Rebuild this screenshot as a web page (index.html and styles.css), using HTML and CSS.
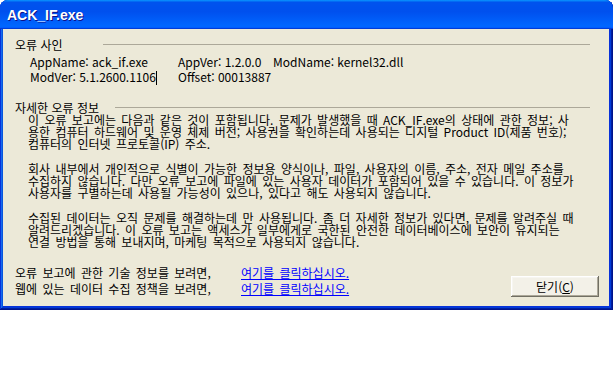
FILE: index.html
```html
<!DOCTYPE html>
<html lang="ko">
<head>
    <meta charset="UTF-8">
    <meta name="viewport" content="width=device-width, initial-scale=1.0">
    <title>ACK_IF.exe</title>
    <link rel="stylesheet" href="styles.css">
</head>
<body>
    <div class="window">
        <div class="title-bar">ACK_IF.exe</div>

        <div class="window-body">
            <div class="group-title">
                <span class="group-label label-cause">오류 사인</span>
                <span class="rule"></span>
            </div>
            <div class="sig">
                <span>AppName: ack_if.exe</span>
                <span>AppVer: 1.2.0.0</span>
                <span>ModName: kernel32.dll</span>
                <span>ModVer: 5.1.2600.1106<span class="caret"></span></span>
                <span>Offset: 00013887</span>
            </div>

            <div class="group-title group-details">
                <span class="group-label label-details">자세한 오류 정보</span>
                <span class="rule"></span>
            </div>
            <div class="details">
                <p>이 오류 보고에는 다음과 같은 것이 포함됩니다. 문제가 발생했을 때 ACK_IF.exe의 상태에 관한 정보; 사<br>용한 컴퓨터 하드웨어 및 운영 체제 버전; 사용권을 확인하는데 사용되는 디지털 Product ID(제품 번호);<br>컴퓨터의 인터넷 프로토콜(IP) 주소.</p>
                <p>회사 내부에서 개인적으로 식별이 가능한 정보용 양식이나, 파일, 사용자의 이름, 주소, 전자 메일 주소를<br>수집하지 않습니다. 다만 오류 보고에 파일에 있는 사용자 데이터가 포함되어 있을 수 있습니다. 이 정보가<br>사용자를 구별하는데 사용될 가능성이 있으나, 있다고 해도 사용되지 않습니다.</p>
                <p>수집된 데이터는 오직 문제를 해결하는데 만 사용됩니다. 좀 더 자세한 정보가 있다면, 문제를 알려주실 때<br>알려드리겠습니다. 이 오류 보고는 액세스가 일부에게로 국한된 안전한 데이터베이스에 보안이 유지되는<br>연결 방법을 통해 보내지며, 마케팅 목적으로 사용되지 않습니다.</p>
            </div>

            <div class="footer">
                <div class="help">
                    <span>오류 보고에 관한 기술 정보를 보려면,</span>
                    <a href="#">여기를 클릭하십시오.</a>
                    <span>웹에 있는 데이터 수집 정책을 보려면,</span>
                    <a href="#">여기를 클릭하십시오.</a>
                </div>
                <button class="btn-close">닫기(<u>C</u>)</button>
            </div>
        </div>
    </div>
</body>
</html>
```

FILE: styles.css
```css
body {
    margin: 0;
    background: #fff;
    font-family: "Noto Sans CJK KR", "Liberation Sans", sans-serif;
    font-size: 12px;
    color: #000;
}
.window {
    width: 613px;
    height: 310px;
    box-sizing: border-box;
    display: flex;
    flex-direction: column;
    background-color: #0831d9;
    border-radius: 8px 8px 0 0;
    box-shadow: inset -1px -1px #00138c, inset 1px 1px #0831d9, inset -2px -2px #001ea0, inset 2px 2px #166aee, inset -3px -3px #003bda, inset 3px 3px #0855dd;
}
.title-bar {
    height: 29px;
    box-sizing: border-box;
    padding: 6px 0 0 7px;
    border-radius: 8px 8px 0 0;
    background: linear-gradient(180deg, #0997ff, #0053ee 8%, #0050ee 40%, #06f 88%, #06f 93%, #005bff 95%, #003dd7 96%, #003dd7);
    color: #fff;
    font-family: "Liberation Sans", Arial, sans-serif;
    font-weight: bold;
    font-size: 14px;
    line-height: 18px;
    text-shadow: 1px 1px #0f1089;
}
.window-body {
    flex: 1;
    margin: 0 4px 4px 3px;
    padding: 10px 10px 0 12px;
    background: #ece9d8;
    display: flex;
    flex-direction: column;
}
.group-title {
    display: flex;
    align-items: center;
    line-height: 12px;
    margin-right: 9px;
}
.group-label {
    flex: none;
}
.label-cause {
    width: 88px;
}
.label-details {
    width: 100px;
}
.rule {
    flex: 1;
    height: 1px;
    background: #aca899;
    margin-top: -1px;
}
.sig {
    display: grid;
    grid-template-columns: 148px 95px auto;
    padding-left: 15px;
    margin-top: 3px;
    line-height: 15px;
    white-space: nowrap;
}
.caret {
    display: inline-block;
    width: 1px;
    height: 14px;
    background: #000;
    vertical-align: -3px;
}
.group-details {
    margin-top: 17px;
}
.details {
    padding-left: 13px;
    line-height: 12px;
    white-space: nowrap;
    word-spacing: 2px;
}
.details p {
    margin: 0 0 13px;
}
.footer {
    margin-top: auto;
    margin-bottom: 9px;
    display: flex;
    align-items: flex-end;
}
.help {
    display: grid;
    grid-template-columns: 226px auto;
    line-height: 16px;
    word-spacing: 2px;
}
.help a {
    color: #0000ff;
}
.btn-close {
    margin-left: auto;
    width: 88px;
    height: 21px;
    padding: 0;
    border: none;
    background: #f3f1e8;
    font-family: inherit;
    font-size: 12px;
    color: #000;
    box-shadow: inset -1px -1px #716f64, inset 1px 1px #fff, inset -2px -2px #aca899, inset 2px 2px #f7f6f1;
}
```
